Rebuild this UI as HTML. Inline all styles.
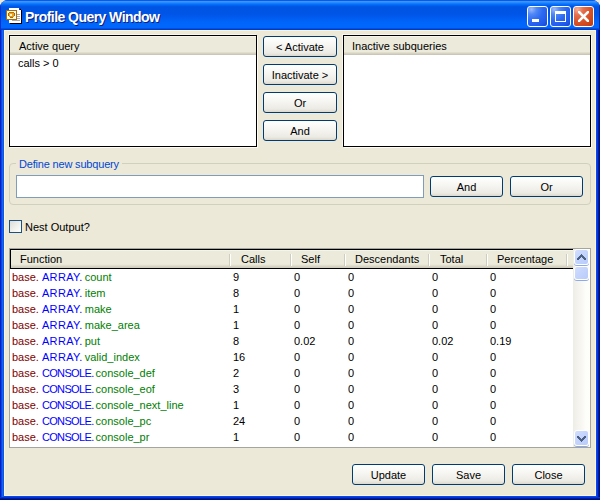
<!DOCTYPE html>
<html><head><meta charset="utf-8">
<style>
*{margin:0;padding:0;box-sizing:border-box}
html,body{width:600px;height:500px;overflow:hidden;background:#ece9d8}
body{position:relative;font-family:"Liberation Sans",sans-serif;font-size:11px;color:#000}
.a{position:absolute}
#win{left:0;top:0;width:600px;height:500px;border-radius:8px 8px 0 0;overflow:hidden;background:#0831d9}
#title{left:0;top:0;width:600px;height:30px;background:linear-gradient(180deg,#0a5ae8 0px,#0a5ae8 1px,#3d93ff 1px,#3d93ff 2px,#2a8aff 2px,#2a8aff 3px,#127cfe 3px,#127cfe 4px,#036efb 4px,#036efb 5px,#0262ee 5px,#0262ee 6px,#0057e5 6px,#0057e5 7px,#0054e3 7px,#0055e6 14px,#005cf0 18px,#0063f8 21px,#0067fc 24px,#0066fc 27px,#0066fc 28px,#0050e4 28px,#0050e4 29px,#003ccc 29px,#003ccc 30px)}
#ttext{left:25px;top:9px;color:#fff;font-weight:bold;font-size:14px;line-height:17px;letter-spacing:-0.55px;white-space:nowrap;text-shadow:1px 1px 0 #0a1e7a}
.tb{top:6px;width:21px;height:21px;border:1px solid #fff;border-radius:3px}
#bmin{left:527px;background:radial-gradient(circle at 18% 12%,#9ab8fa 0,#5088f6 22%,#2c6af2 50%,#2058e8 80%,#1646d0 100%)}
#bmax{left:550px;background:radial-gradient(circle at 18% 12%,#9ab8fa 0,#5088f6 22%,#2c6af2 50%,#2058e8 80%,#1646d0 100%)}
#bcls{left:573px;background:radial-gradient(circle at 18% 12%,#f4b098 0,#e4704e 25%,#d9542a 55%,#cc4214 85%,#b83808 100%)}
#frameL{left:0;top:30px;width:4px;height:467px;background:linear-gradient(90deg,#001ec8 0,#001ec8 1px,#0a46e0 1px,#0a46e0 2px,#1464f4 2px,#1464f4 3px,#0c56e8 3px)}
#frameR{left:596px;top:30px;width:4px;height:467px;background:linear-gradient(90deg,#0546f5 0,#0546f5 1px,#0838d8 1px,#0838d8 2px,#001c98 2px,#001c98 3px,#000e80 3px)}
#frameB{left:0;top:497px;width:600px;height:3px;background:linear-gradient(180deg,#0834d0 0,#0834d0 1px,#001c98 1px,#001c98 2px,#000e80 2px)}
#client{left:4px;top:30px;width:592px;height:466px;background:#ece9d8;border:1px solid #fbf5e0}
.lb{background:#fff;border:1px solid #000;box-shadow:-1px -1px 0 #faf8ee,1px 1px 0 #fdfbf2}
.hdr{left:0;top:0;right:0;height:19px;background:linear-gradient(180deg,#f7f6ee 0,#f7f6ee 1px,#ebeadb 1px,#ebeadb 16px,#e2decd 16px,#e2decd 17px,#d6d2c2 17px,#d6d2c2 18px,#cbc7b8 18px);}
.hdr span{position:absolute;top:4px;line-height:13px;white-space:nowrap}
.btn{position:absolute;border:1px solid #003c74;border-radius:3px;background:linear-gradient(180deg,#ffffff 0,#fbfbf9 20%,#f2f1ec 60%,#ebeae3 85%,#dcd8cc 100%);text-align:center;line-height:19px;padding-top:1px;white-space:nowrap}
.grp{border:1px solid #d0d0bf;border-radius:4px}
.txt{position:absolute;white-space:nowrap;line-height:13px}
.cb{border:1px solid #1c5180;background:linear-gradient(135deg,#dcdcd7 0,#f2f2ef 60%,#ffffff 100%)}
.sep{position:absolute;top:4px;width:2px;height:12px;border-left:1px solid #cfcdbd;border-right:1px solid #fff}
.row{position:absolute;left:0;height:16px;line-height:16px;white-space:nowrap;width:562px}
.row span{position:absolute}
.sbb{border:1px solid #fff;border-radius:3px;background:linear-gradient(135deg,#d2defd 0,#c4d4fc 45%,#b8ccfa 100%);box-shadow:0 1px 0 #8eaae6}
.m{color:#800000}.bl{color:#0000ff}.g{color:#008000}
</style></head><body>
<div id="win" class="a">
  <div id="title" class="a"></div>
  <svg class="a" style="left:5px;top:7px" width="18" height="18" viewBox="0 0 18 18" shape-rendering="crispEdges">
    <rect x="4" y="1" width="12" height="15" fill="#fff"/>
    <rect x="16" y="3" width="1" height="14" fill="#000"/>
    <rect x="5" y="16" width="12" height="1" fill="#000"/>
    <rect x="14" y="1" width="2" height="2" fill="#0a3cd0"/>
    <rect x="15" y="2" width="1" height="1" fill="#000"/>
    <rect x="12" y="7" width="3" height="1" fill="#a8a8b0"/>
    <rect x="12" y="9" width="3" height="1" fill="#a8a8b0"/>
    <rect x="12" y="11" width="3" height="1" fill="#a8a8b0"/>
    <rect x="7" y="13" width="8" height="1" fill="#a8a8b0"/>
    <rect x="1" y="3" width="11" height="10" fill="#a86c08"/>
    <rect x="2" y="4" width="9" height="8" fill="#fffbea"/>
    <rect x="4" y="5" width="5" height="1" fill="#b87010"/>
    <rect x="3" y="6" width="7" height="3" fill="#f0a818"/>
    <rect x="3" y="6" width="1" height="3" fill="#a86808"/>
    <rect x="9" y="6" width="1" height="3" fill="#a86808"/>
    <rect x="4" y="9" width="5" height="1" fill="#e09810"/>
    <rect x="5" y="10" width="3" height="1" fill="#a86808"/>
    <rect x="5" y="7" width="2" height="2" fill="#fff4d0"/>
  </svg>
  <div id="ttext" class="a">Profile Query Window</div>
  <div id="bmin" class="a tb"><div class="a" style="left:4px;top:12px;width:7px;height:3px;background:#fff"></div></div>
  <div id="bmax" class="a tb"><div class="a" style="left:4px;top:4px;width:11px;height:11px;border:1px solid #fff;border-top-width:3px"></div></div>
  <div id="bcls" class="a tb">
    <svg class="a" style="left:4px;top:4px" width="11" height="11" viewBox="0 0 11 11"><path d="M1 1 L10 10 M10 1 L1 10" stroke="#fff" stroke-width="2.5" stroke-linecap="square"/></svg>
  </div>
  <div class="a" style="left:0;top:3px;width:1px;height:27px;background:#0a2fd0"></div>
  <div class="a" style="left:599px;top:3px;width:1px;height:27px;background:#0a2ab8"></div>
  <div id="frameL" class="a"></div>
  <div id="frameR" class="a"></div>
  <div id="frameB" class="a"></div>
  <div class="a" style="left:4px;top:496px;width:592px;height:1px;background:#0546f5"></div>
  <div id="client" class="a"></div>

  <!-- Active query list -->
  <div class="a lb" style="left:9px;top:35px;width:248px;height:112px">
    <div class="a hdr"><span style="left:9px">Active query</span></div>
    <div class="txt" style="left:8px;top:21px">calls &gt; 0</div>
  </div>
  <!-- buttons column -->
  <div class="btn" style="left:263px;top:36px;width:74px;height:21px">&lt; Activate</div>
  <div class="btn" style="left:263px;top:64px;width:74px;height:21px">Inactivate &gt;</div>
  <div class="btn" style="left:263px;top:92px;width:74px;height:21px">Or</div>
  <div class="btn" style="left:263px;top:120px;width:74px;height:21px">And</div>
  <!-- Inactive list -->
  <div class="a lb" style="left:343px;top:35px;width:248px;height:112px">
    <div class="a hdr"><span style="left:8px">Inactive subqueries</span></div>
  </div>

  <!-- group -->
  <div class="a grp" style="left:9px;top:163px;width:582px;height:42px"></div>
  <div class="txt" style="left:16px;top:158px;padding:0 3px;letter-spacing:-0.18px;background:#ece9d8;color:#0046d5">Define new subquery</div>
  <div class="a" style="left:16px;top:175px;width:408px;height:23px;border:1px solid #7f9db9;background:#fff"></div>
  <div class="btn" style="left:430px;top:176px;width:73px;height:21px">And</div>
  <div class="btn" style="left:510px;top:176px;width:73px;height:21px">Or</div>

  <!-- checkbox -->
  <div class="a cb" style="left:9px;top:220px;width:13px;height:13px"></div>
  <div class="txt" style="left:25px;top:221px">Nest Output?</div>

  <!-- table -->
  <div class="a" style="left:9px;top:248px;width:582px;height:200px;border:1px solid #a5a5a0;background:#fff;overflow:hidden">
    <div class="a" style="left:0;top:0;width:563px;height:20px;border:1px solid #000;border-right:none;background:linear-gradient(180deg,#fffff8 0,#ebeadb 1px,#ebeadb 14px,#e6e3d2 15px,#dcd8c8 16px,#d2cebf 17px)">
      <span class="txt" style="left:9px;top:3px">Function</span>
      <div class="sep" style="left:218px"></div>
      <span class="txt" style="left:230px;top:3px">Calls</span>
      <div class="sep" style="left:279px"></div>
      <span class="txt" style="left:290px;top:3px">Self</span>
      <div class="sep" style="left:333px"></div>
      <span class="txt" style="left:344px;top:3px">Descendants</span>
      <div class="sep" style="left:417px"></div>
      <span class="txt" style="left:429px;top:3px">Total</span>
      <div class="sep" style="left:475px"></div>
      <span class="txt" style="left:486px;top:3px">Percentage</span>
      <div class="sep" style="left:555px"></div>
    </div>
    <div id="rows" class="a" style="left:0;top:20px;width:563px;height:178px">
      <div class="row" style="top:0px"><span style="left:2px"><span class="m" style="position:static">base.</span><span class="bl" style="position:static;margin-left:3px;letter-spacing:0.35px">ARRAY.</span><span class="g" style="position:static;margin-left:2px">count</span></span><span style="left:223px">9</span><span style="left:284px">0</span><span style="left:338px">0</span><span style="left:422px">0</span><span style="left:480px">0</span></div>
      <div class="row" style="top:16px"><span style="left:2px"><span class="m" style="position:static">base.</span><span class="bl" style="position:static;margin-left:3px;letter-spacing:0.35px">ARRAY.</span><span class="g" style="position:static;margin-left:2px">item</span></span><span style="left:223px">8</span><span style="left:284px">0</span><span style="left:338px">0</span><span style="left:422px">0</span><span style="left:480px">0</span></div>
      <div class="row" style="top:32px"><span style="left:2px"><span class="m" style="position:static">base.</span><span class="bl" style="position:static;margin-left:3px;letter-spacing:0.35px">ARRAY.</span><span class="g" style="position:static;margin-left:2px">make</span></span><span style="left:223px">1</span><span style="left:284px">0</span><span style="left:338px">0</span><span style="left:422px">0</span><span style="left:480px">0</span></div>
      <div class="row" style="top:48px"><span style="left:2px"><span class="m" style="position:static">base.</span><span class="bl" style="position:static;margin-left:3px;letter-spacing:0.35px">ARRAY.</span><span class="g" style="position:static;margin-left:2px">make_area</span></span><span style="left:223px">1</span><span style="left:284px">0</span><span style="left:338px">0</span><span style="left:422px">0</span><span style="left:480px">0</span></div>
      <div class="row" style="top:64px"><span style="left:2px"><span class="m" style="position:static">base.</span><span class="bl" style="position:static;margin-left:3px;letter-spacing:0.35px">ARRAY.</span><span class="g" style="position:static;margin-left:2px">put</span></span><span style="left:223px">8</span><span style="left:284px">0.02</span><span style="left:338px">0</span><span style="left:422px">0.02</span><span style="left:480px">0.19</span></div>
      <div class="row" style="top:80px"><span style="left:2px"><span class="m" style="position:static">base.</span><span class="bl" style="position:static;margin-left:3px;letter-spacing:0.35px">ARRAY.</span><span class="g" style="position:static;margin-left:2px">valid_index</span></span><span style="left:223px">16</span><span style="left:284px">0</span><span style="left:338px">0</span><span style="left:422px">0</span><span style="left:480px">0</span></div>
      <div class="row" style="top:96px"><span style="left:2px"><span class="m" style="position:static">base.</span><span class="bl" style="position:static;margin-left:3px;letter-spacing:-0.65px">CONSOLE.</span><span class="g" style="position:static;margin-left:2px">console_def</span></span><span style="left:223px">2</span><span style="left:284px">0</span><span style="left:338px">0</span><span style="left:422px">0</span><span style="left:480px">0</span></div>
      <div class="row" style="top:112px"><span style="left:2px"><span class="m" style="position:static">base.</span><span class="bl" style="position:static;margin-left:3px;letter-spacing:-0.65px">CONSOLE.</span><span class="g" style="position:static;margin-left:2px">console_eof</span></span><span style="left:223px">3</span><span style="left:284px">0</span><span style="left:338px">0</span><span style="left:422px">0</span><span style="left:480px">0</span></div>
      <div class="row" style="top:128px"><span style="left:2px"><span class="m" style="position:static">base.</span><span class="bl" style="position:static;margin-left:3px;letter-spacing:-0.65px">CONSOLE.</span><span class="g" style="position:static;margin-left:2px">console_next_line</span></span><span style="left:223px">1</span><span style="left:284px">0</span><span style="left:338px">0</span><span style="left:422px">0</span><span style="left:480px">0</span></div>
      <div class="row" style="top:144px"><span style="left:2px"><span class="m" style="position:static">base.</span><span class="bl" style="position:static;margin-left:3px;letter-spacing:-0.65px">CONSOLE.</span><span class="g" style="position:static;margin-left:2px">console_pc</span></span><span style="left:223px">24</span><span style="left:284px">0</span><span style="left:338px">0</span><span style="left:422px">0</span><span style="left:480px">0</span></div>
      <div class="row" style="top:160px"><span style="left:2px"><span class="m" style="position:static">base.</span><span class="bl" style="position:static;margin-left:3px;letter-spacing:-0.65px">CONSOLE.</span><span class="g" style="position:static;margin-left:2px">console_pr</span></span><span style="left:223px">1</span><span style="left:284px">0</span><span style="left:338px">0</span><span style="left:422px">0</span><span style="left:480px">0</span></div>
    </div>
    <!-- scrollbar -->
    <div class="a" style="left:563px;top:0;width:17px;height:198px;background:linear-gradient(90deg,#eeede5 0,#f6f5f0 40%,#fdfdf9 75%,#fefefb 100%)">
      <div class="a sbb" style="left:1px;top:0;width:15px;height:16px"></div>
      <div class="a sbb" style="left:1px;top:17px;width:15px;height:14px"></div>
      <div class="a sbb" style="left:1px;top:181px;width:15px;height:16px"></div>
      <svg class="a" style="left:0;top:0" width="17" height="198" shape-rendering="crispEdges"><g fill="#4d6185"><rect x="8" y="5" width="1" height="1"/><rect x="7" y="6" width="3" height="1"/><rect x="6" y="7" width="5" height="1"/><rect x="5" y="8" width="3" height="1"/><rect x="9" y="8" width="3" height="1"/><rect x="4" y="9" width="3" height="1"/><rect x="10" y="9" width="3" height="1"/><rect x="4" y="10" width="2" height="1"/><rect x="11" y="10" width="2" height="1"/><rect x="8" y="192" width="1" height="1"/><rect x="7" y="191" width="3" height="1"/><rect x="6" y="190" width="5" height="1"/><rect x="5" y="189" width="3" height="1"/><rect x="9" y="189" width="3" height="1"/><rect x="4" y="188" width="3" height="1"/><rect x="10" y="188" width="3" height="1"/><rect x="4" y="187" width="2" height="1"/><rect x="11" y="187" width="2" height="1"/></g></svg>
    </div>
  </div>

  <!-- bottom buttons -->
  <div class="btn" style="left:352px;top:464px;width:73px;height:21px">Update</div>
  <div class="btn" style="left:432px;top:464px;width:73px;height:21px">Save</div>
  <div class="btn" style="left:512px;top:464px;width:73px;height:21px">Close</div>
</div>
</body></html>
